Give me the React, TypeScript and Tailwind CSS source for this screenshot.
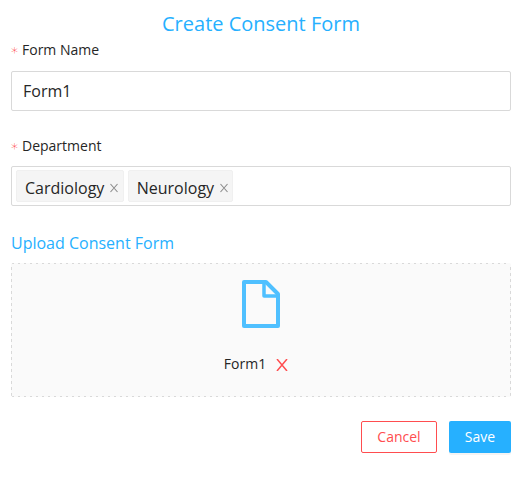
import React from "react";

function Label({ children }: { children: React.ReactNode }) {
  return (
    <div className="flex h-[22px] items-center text-sm leading-[22px] text-[#262626]">
      <span className="mr-1 pt-1 font-['DejaVu_Sans',sans-serif] text-sm leading-[20px] font-extralight text-[#ff1a1e]">*</span>
      {children}
    </div>
  );
}

function Tag({ name }: { name: string }) {
  return (
    <span className="flex h-8 items-center rounded-xs border border-[#f0f0f0] bg-[#f5f5f5] pr-[3.9px] pl-2 text-base">
      <span className="pt-[3px]">{name}</span>
      <svg className="mt-[3px] ml-[4.5px] h-[10px] w-[10px]" viewBox="0 0 10 10" fill="none" stroke="#8c8c8c" strokeWidth="1.1">
        <path d="M1.5 1 8.5 9M8.5 1 1.5 9" />
      </svg>
    </span>
  );
}

export default function App() {
  return (
    <div className="h-[480px] bg-white pr-2 pl-[11px] font-['Open_Sans','Noto_Sans',sans-serif] text-[#262626]">
      <h1 className="pt-2 text-center text-xl leading-[31px] text-[#26b0ff]">Create Consent Form</h1>
      <Label>Form Name</Label>
      <div className="mt-[10px] flex h-10 items-center rounded-xs border border-[#d9d9d9] px-[11px] text-base">Form1</div>
      <div className="mt-6">
        <Label>Department</Label>
      </div>
      <div className="mt-[9px] flex h-10 items-center gap-1 rounded-xs border border-[#d9d9d9] px-1">
        <Tag name="Cardiology" />
        <Tag name="Neurology" />
      </div>
      <h2 className="mt-[25px] text-base leading-[25px] text-[#26b0ff]">Upload Consent Form</h2>
      <div className="mt-[7px] flex h-[134px] flex-col items-center rounded-xs bg-[#fafafa] bg-[repeating-linear-gradient(90deg,#d9d9d9_0_2.5px,transparent_2.5px_6px),repeating-linear-gradient(90deg,#d9d9d9_0_2.5px,transparent_2.5px_6px),repeating-linear-gradient(0deg,#d9d9d9_0_2.5px,transparent_2.5px_6px),repeating-linear-gradient(0deg,#d9d9d9_0_2.5px,transparent_2.5px_6px)] bg-[length:calc(100%-2px)_1px,calc(100%-2px)_1px,1px_calc(100%-2px),1px_calc(100%-2px)] bg-[position:1px_0,1px_100%,0_1px,100%_1px] bg-no-repeat pt-[17px]">
        <svg className="h-12 w-[38px]" viewBox="0 0 38 48" fill="none" stroke="#4fc0ff" strokeWidth="4" strokeLinejoin="round">
          <path d="M2 2h22l12 12v32H2z" />
          <path d="M22 2v14h14" strokeWidth="3.5" />
        </svg>
        <div className="mt-[25px] mr-[10px] flex items-center text-sm leading-[22px]">
          Form1
          <svg className="mt-[2px] ml-[10px] h-3 w-3" viewBox="0 0 12 12" fill="none" stroke="#ff4d4f" strokeWidth="1.5">
            <path d="M1 0 11 12M11 0 1 12" />
          </svg>
        </div>
      </div>
      <div className="mt-6 flex justify-end gap-3 text-sm">
        <button className="h-8 w-[76px] rounded-xs border border-[#ff4d4f] text-[#ff4d4f]">Cancel</button>
        <button className="h-8 w-[62px] rounded-xs bg-[#26b0ff] text-white shadow-[0_2px_0_rgba(0,0,0,0.045)]">Save</button>
      </div>
    </div>
  );
}
